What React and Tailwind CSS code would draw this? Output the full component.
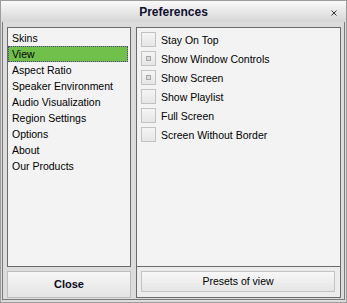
import React from "react";

const items = ["Skins","View","Aspect Ratio","Speaker Environment","Audio Visualization","Region Settings","Options","About","Our Products"];
const opts = [
  { label: "Stay On Top", mark: false },
  { label: "Show Window Controls", mark: true },
  { label: "Show Screen", mark: true },
  { label: "Show Playlist", mark: false },
  { label: "Full Screen", mark: false },
  { label: "Screen Without Border", mark: false },
];

export default function App() {
  return (
    <div className="w-[347px] h-[303px] flex flex-col bg-[#dcdcdc] border border-[#9c9c9c] text-black" style={{ fontFamily: '"Liberation Sans", Arial, sans-serif' }}>
      <div className="h-[21px] shrink-0 relative flex items-center justify-center bg-gradient-to-b from-[#fafafa] to-[#d6d6d6]">
        <span className="text-[12px] font-bold text-[#101030]">Preferences</span>
        <svg className="absolute right-[9px] top-[9px]" width="6" height="6" viewBox="0 0 6 6">
          <path d="M0.5 0.5L5.5 5.5M5.5 0.5L0.5 5.5" stroke="#333" strokeWidth="1" />
        </svg>
      </div>
      <div className="flex-1 px-[1px] pb-[2px] flex">
        <div className="flex-1 border border-t-0 border-[#7a7a7a] flex gap-[5px] pl-[4px] pr-[3px] pt-[5px] pb-[1px]">
          <div className="w-[124px] flex flex-col gap-[4px]">
            <div className="h-[240px] border border-[#6a6a6a] bg-[#f3f3f3] pt-[2px] pr-[2px]">
              {items.map((t) => (
                <div key={t} className={"h-[16px] flex items-center pl-[4px] text-[10.5px] leading-none " + (t === "View" ? "bg-[#72c04c] outline outline-1 outline-dotted outline-offset-[-1px] outline-[#5a3a8a]" : "")}>
                  {t}
                </div>
              ))}
            </div>
            <div className="h-[27px] border border-[#bdbdbd] bg-gradient-to-b from-[#f7f7f7] to-[#e3e3e3] flex items-center justify-center text-[11px] font-bold text-[#0a0a20]">
              Close
            </div>
          </div>
          <div className="flex-1 border border-[#6a6a6a] flex flex-col">
            <div className="h-[239px] border-b border-[#6a6a6a] bg-[#f3f3f3] pt-[4px] pl-[4px] flex flex-col gap-[4px]">
              {opts.map((o) => (
                <div key={o.label} className="h-[15px] flex items-center gap-[5px]">
                  <div className="w-[15px] h-[15px] border border-[#c2c2c2] bg-gradient-to-b from-[#f5f5f5] to-[#e6e6e6] flex items-center justify-center">
                    {o.mark && <div className="w-[5px] h-[5px] border border-[#a8a8a8] bg-[#dcdcdc]" />}
                  </div>
                  <span className="text-[10.5px] leading-none translate-y-[1px]">{o.label}</span>
                </div>
              ))}
            </div>
            <div className="flex-1 bg-[#ececec] pt-[4px] pl-[4px] pr-[5px] pb-[5px]">
              <div className="h-[21px] border border-[#c4c4c4] bg-gradient-to-b from-[#f8f8f8] to-[#e4e4e4] flex items-center justify-center text-[10.5px]">
                Presets of view
              </div>
            </div>
          </div>
        </div>
      </div>
    </div>
  );
}
